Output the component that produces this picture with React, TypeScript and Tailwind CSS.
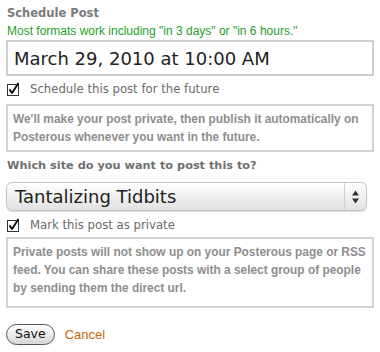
import React from 'react';

const lucida = "font-['DejaVu_Sans',sans-serif]";
const helv = "font-['Liberation_Sans',Arial,sans-serif]";

const CheckMark: React.FC = () => (
    <svg width="13" height="14" viewBox="0 0 13 14" className="shrink-0">
        <rect x="0.5" y="2.5" width="11" height="11" fill="#fff" stroke="#333" />
        <path d="M2.5 7.5 L5 11 L11.5 1" fill="none" stroke="#111" strokeWidth="2" strokeLinejoin="round" />
    </svg>
);

const CheckRow: React.FC<{ label: string }> = ({ label }) => (
    <label className="flex items-center gap-[10px] pl-[7px] h-[14px]">
        <CheckMark />
        <span className={`${lucida} text-[11.7px] leading-[14px] text-[#6a6a6a]`}>{label}</span>
    </label>
);

const HintBox: React.FC<{ children: React.ReactNode; className?: string }> = ({ children, className = '' }) => (
    <div className={`mx-[6px] border-2 border-[#d2d2d2] pl-[5px] pr-[1px] ${helv} text-[11.9px] font-bold leading-[18px] text-[#8e8e8e] ${className}`}>
        {children}
    </div>
);

const SchedulePostForm: React.FC = () => (
    <div className="w-[380px] h-[352px] bg-white overflow-hidden">
        <h2 className={`${lucida} px-[7px] pt-[5px] text-[11.5px] font-bold text-[#7a7a7a] leading-[16px]`}>Schedule Post</h2>
        <p className={`${helv} px-[7px] mt-[2px] text-[12px] leading-[16px] text-[#1f9e1f]`}>
            Most formats work including "in 3 days" or "in 6 hours."
        </p>
        <div className={`mx-[6px] mt-[1px] h-[36px] border-2 border-[#cfcfcf] px-[6px] flex items-center ${lucida} text-[18px] text-[#222]`}>
            March 29, 2010 at 10:00 AM
        </div>
        <div className="mt-[6px]">
            <CheckRow label="Schedule this post for the future" />
        </div>
        <HintBox className="mt-[8px] pt-[4px] pb-[4px]">
            We'll make your post private, then publish it automatically on Posterous whenever you want in the future.
        </HintBox>
        <h2 className={`${lucida} px-[7px] mt-[6px] text-[11.3px] font-bold text-[#6f6f6f] leading-[16px]`}>
            Which site do you want to post this to?
        </h2>
        <div className="mx-[6px] mr-[13px] mt-[8px] h-[29px] flex rounded-[6px] border border-[#c4c4c4] bg-gradient-to-b from-[#ffffff] via-[#f0f0f0] to-[#e2e2e2] shadow-[0_1px_1px_rgba(0,0,0,0.15)] overflow-hidden">
            <div className={`flex-1 flex items-center px-[8px] ${lucida} text-[18px] text-[#222]`}>Tantalizing Tidbits</div>
            <div className="w-[22px] border-l border-[#d2d2d2] flex items-center justify-center">
                <svg width="9" height="16" viewBox="0 0 9 16">
                    <path d="M4.5 1.5 L8 6.5 L1 6.5 Z" fill="#333" />
                    <path d="M4.5 14.5 L8 9.5 L1 9.5 Z" fill="#333" />
                </svg>
            </div>
        </div>
        <div className="mt-[7px]">
            <CheckRow label="Mark this post as private" />
        </div>
        <HintBox className="mt-[5px] pt-[4px] pb-[9px]">
            Private posts will not show up on your Posterous page or RSS feed. You can share these posts with a select group of people by sending them the direct url.
        </HintBox>
        <div className="mt-[16px] pl-[6px] flex items-center gap-[10px]">
            <button className={`h-[21px] px-[8px] rounded-full border border-[#555] bg-gradient-to-b from-[#ffffff] to-[#d6d6d6] ${lucida} text-[12.5px] text-[#111] leading-none`}>
                Save
            </button>
            <a className={`${helv} text-[13px] text-[#c46a0a]`}>Cancel</a>
        </div>
    </div>
);

export default function App() {
    return <SchedulePostForm />;
}
